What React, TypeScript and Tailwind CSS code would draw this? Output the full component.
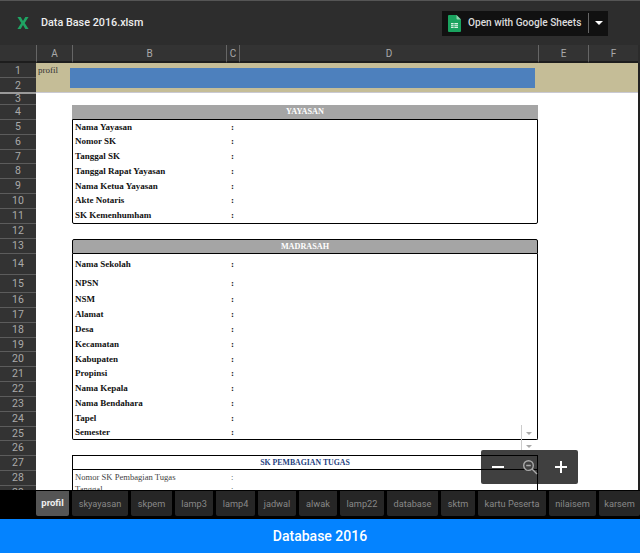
const rows: [string, number][] = [
  ["1", 15], ["2", 16], ["3", 10.5], ["4", 15], ["5", 15], ["6", 15], ["7", 14], ["8", 15], ["9", 15], ["10", 15],
  ["11", 15], ["12", 15], ["13", 15], ["14", 21], ["15", 18], ["16", 15], ["17", 15], ["18", 15], ["19", 14], ["20", 15],
  ["21", 15], ["22", 15], ["23", 15], ["24", 15], ["25", 14], ["26", 15], ["27", 15], ["28", 15], ["29", 15],
];

const tabs: [string, string][] = [
  ["skyayasan", "w-[56px]"], ["skpem", "w-[41px]"], ["lamp3", "w-[38px]"], ["lamp4", "w-[39px]"], ["jadwal", "w-[38px]"], ["alwak", "w-[38px]"],
  ["lamp22", "w-[44px]"], ["database", "w-[51px]"], ["sktm", "w-[34px]"], ["kartu Peserta", "w-[68px]"], ["nilaisem", "w-[47px]"], ["karsem", "w-[41px]"],
];
const columns = ["A", "B", "C", "D", "E", "F"];

const yayasan = ["Nama Yayasan", "Nomor SK", "Tanggal SK", "Tanggal Rapat Yayasan", "Nama Ketua Yayasan", "Akte Notaris", "SK Kemenhumham"];
const madrasah: [string, string][] = [
  ["Nama Sekolah", "h-[21px]"], ["NPSN", "h-[17px]"], ["NSM", "h-[15px]"], ["Alamat", "h-[15px]"], ["Desa", "h-[15px]"], ["Kecamatan", "h-[15px]"],
  ["Kabupaten", "h-[14px]"], ["Propinsi", "h-[15px]"], ["Nama Kepala", "h-[15px]"], ["Nama Bendahara", "h-[15px]"], ["Tapel", "h-[15px]"], ["Semester", "h-[13px]"],
];

function Field({ label, rowClass, light }: { label: string; rowClass: string; light?: boolean }) {
  return (
    <div className={`flex items-center pl-[2px] ${rowClass} ${light ? "text-[8.6px] font-normal text-[#444]" : "text-[9px] font-bold text-[#111]"}`}>
      <span className="w-[156px] whitespace-nowrap">{label}</span>
      <span>:</span>
    </div>
  );
}

export default function App() {
  return (
    <div className="flex h-[553px] w-[640px] flex-col overflow-hidden bg-black font-['Roboto',sans-serif]">
      <header className="flex h-[45px] shrink-0 items-center border-t border-[#555] bg-[#2d2d2d] pl-[17px] pr-[32px]">
        <svg width="12" height="14" viewBox="0 0 14 16" className="shrink-0" aria-hidden="true">
          <path d="M0.5 1H4.3L7 5.6 9.7 1H13.5L9 8l4.5 7H9.7L7 10.4 4.3 15H0.5L5 8Z" fill="#1fa463" />
        </svg>
        <span className="ml-[12px] text-[10.8px] font-medium text-[#eee]">Data Base 2016.xlsm</span>
        <div className="ml-auto flex h-[25px] w-[166px] items-center bg-[#111] pl-[6px]">
          <svg width="13" height="17" viewBox="0 0 13 17" className="shrink-0" aria-hidden="true">
            <path d="M1 0H8.5L13 4.5V16a1 1 0 0 1-1 1H1a1 1 0 0 1-1-1V1a1 1 0 0 1 1-1Z" fill="#1aa35f" />
            <path d="M8.5 0L13 4.5H9.5a1 1 0 0 1-1-1Z" fill="#8ed1ae" />
            <path d="M3 8H10V13H3Z" fill="#d6f0e2" />
            <path d="M3 9.6H10M3 11.4H10M6 8V13" stroke="#1aa35f" strokeWidth="0.7" />
          </svg>
          <span className="ml-[7px] w-[114px] whitespace-nowrap text-[10.1px] font-medium text-[#ddd]">Open with Google Sheets</span>
          <span className="ml-[6px] h-[20px] w-px bg-[#666]" />
          <span className="ml-[6px] h-0 w-0 border-x-[4px] border-t-[4px] border-x-transparent border-t-white" />
        </div>
      </header>

      <main className="relative h-[445px] shrink-0 overflow-hidden bg-[#2b2b2b]">
        <div className="grid grid-cols-[36px_36px_154px_13px_299px_50px_50px_2px] grid-rows-[18px]">
          <div className="col-start-1 row-start-1 border-b-2 border-[#1d1d1d] bg-[#333]" />
          {columns.map((c, i) => (
            <div key={c} className="row-start-1 flex items-center justify-center border-b-2 border-l border-[#1d1d1d] border-l-[#666] bg-[#333] text-[10px] text-[#aaa]" style={{ gridColumnStart: i + 2 }}>
              {c}
            </div>
          ))}
        </div>
        <div className="flex">
          <div className="w-[36px] shrink-0">
            {rows.map(([n, h], i) => (
              <div key={n} className={`flex items-center justify-center border-b bg-[#333] pt-px text-[10.5px] text-[#aaa] ${i === 1 ? "border-b-2 border-[#9a9a9a]" : "border-[#5c5c5c]"}`} style={{ height: h }}>
                {n}
              </div>
            ))}
          </div>
          <div className="flex w-[602px] flex-col bg-white font-['Liberation_Serif',serif]">
            <div className="relative h-[30px] shrink-0 border-b border-[#c9c9d2] bg-[#c5bd97]">
              <span className="absolute left-[2px] top-[1px] text-[9px] text-[#333]">profil</span>
              <div className="absolute left-[34px] top-[5px] h-[20px] w-[465px] bg-[#4d80bd]" />
            </div>
            <div className="ml-[36px] mt-[11.5px] w-[466px] shrink-0">
              <div className="flex h-[14px] items-center justify-center bg-[#a5a5a5] pt-[2px] text-[8.2px] font-bold text-white">YAYASAN</div>
              <div className="rounded-b-[2px] border border-black pt-[0.5px]">
                {yayasan.map((y) => <Field key={y} label={y} rowClass="h-[14.75px]" />)}
              </div>
              <div className="mt-[15px] flex h-[15px] items-center justify-center rounded-t-[2px] border border-black bg-[#a5a5a5] text-[8.2px] font-bold text-white">MADRASAH</div>
              <div className="rounded-b-[2px] border border-t-0 border-black">
                {madrasah.map(([m, h]) => <Field key={m} label={m} rowClass={h} />)}
              </div>
              <div className="mt-[14.5px] flex h-[15.5px] items-center justify-center border border-black bg-white pt-px text-[7.8px] font-bold text-[#1f3f7f]">SK PEMBAGIAN TUGAS</div>
              <div className="h-[40px] border-x border-black">
                <Field label="Nomor SK Pembagian Tugas" rowClass="h-[14.5px]" light />
                <Field label="Tanggal" rowClass="h-[10px]" light />
              </div>
            </div>
          </div>
          <div className="w-[2px] bg-[#222]" />
        </div>

        <div className="absolute left-[521px] top-[380px] h-[25px] w-px bg-[#ccc]" />
        <div className="absolute left-[526px] top-[387px] h-0 w-0 border-x-[3px] border-t-[3px] border-x-transparent border-t-[#aaa]" />
        <div className="absolute left-[526px] top-[400px] h-0 w-0 border-x-[3px] border-t-[3px] border-x-transparent border-t-[#aaa]" />

        <div className="absolute left-[481px] top-[405px] flex h-[34px] w-[97px] items-center rounded-[2px] bg-black/75">
          <span className="ml-[11px] h-[2px] w-[12px] bg-white" />
          <svg width="16" height="16" viewBox="0 0 16 16" className="ml-[18px]" fill="none" stroke="#aaa" strokeWidth="1.4" aria-hidden="true">
            <circle cx="6.5" cy="6.5" r="4.8" />
            <path d="M10 10L15 15M4.2 6.5H8.8" />
          </svg>
          <svg width="12" height="12" viewBox="0 0 12 12" className="ml-[17px]" stroke="#fff" strokeWidth="2" aria-hidden="true">
            <path d="M0 6H12M6 0V12" />
          </svg>
        </div>
      </main>

      <nav className="flex h-[29px] shrink-0 items-start gap-[3px] overflow-hidden bg-black pl-[36px] pt-[1px]">
        <div className="flex h-[25px] w-[33px] shrink-0 items-center justify-center rounded-b-[2px] bg-[#555] text-[9.5px] font-bold text-[#eee]">profil</div>
        {tabs.map(([t, w]) => (
          <div key={t} className={`flex h-[25px] shrink-0 items-center justify-center whitespace-nowrap rounded-b-[2px] bg-[#262626] text-[9.2px] text-[#888] ${w}`}>
            {t}
          </div>
        ))}
      </nav>

      <footer className="flex h-[34px] shrink-0 items-center justify-center bg-[#0483ff] text-[14px] font-medium text-white">
        Database 2016
      </footer>
    </div>
  );
}
